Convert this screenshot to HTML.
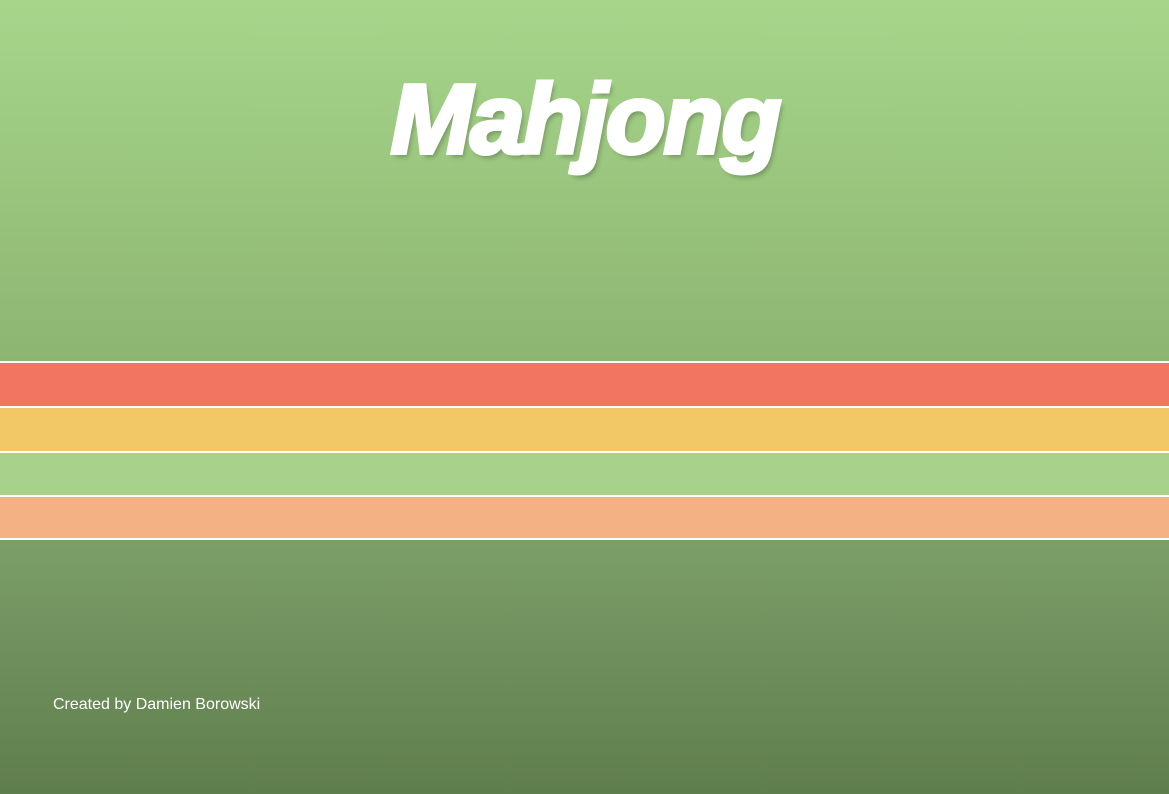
<!DOCTYPE html>
<html><head><meta charset="utf-8"><style>
html,body{margin:0;padding:0;width:1169px;height:794px;overflow:hidden;font-family:"Liberation Sans",sans-serif}
.top{position:absolute;left:0;top:0;width:1169px;height:361px;background:linear-gradient(#a7d68b,#8db572)}
.bot{position:absolute;left:0;top:540px;width:1169px;height:254px;background:linear-gradient(#7c9e68,#5f7e4d)}
.s{position:absolute;left:0;width:1169px}
.title{position:absolute;left:380px;top:54px;width:410px;text-align:center;color:#fff;font-size:98px;font-weight:bold;font-style:italic;letter-spacing:-2px;text-shadow:3px 4px 5px rgba(0,0,0,0.25);-webkit-text-stroke:4px #fff;line-height:130px}
.credit{position:absolute;left:53px;top:696px;color:#fff;font-size:16px}
</style></head><body>
<div class="top"></div>
<div class="s" style="top:361px;height:179px;background:#fff"></div>
<div class="s" style="top:363px;height:43px;background:#f27562"></div>
<div class="s" style="top:408px;height:43px;background:#f2c766"></div>
<div class="s" style="top:453px;height:42px;background:#a8d28c"></div>
<div class="s" style="top:497px;height:41px;background:#f3b184"></div>
<div class="bot"></div>
<div class="title">Mahjong</div>
<div class="credit">Created by Damien Borowski</div>
</body></html>
